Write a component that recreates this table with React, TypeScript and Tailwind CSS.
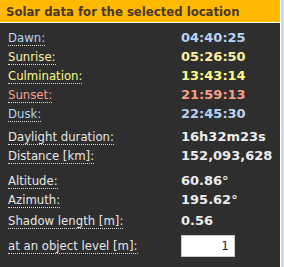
const rows = [
  { label: "Dawn:", value: "04:40:25", color: "text-[#b8d4f4]" },
  { label: "Sunrise:", value: "05:26:50", color: "text-[#fbf0a6]" },
  { label: "Culmination:", value: "13:43:14", color: "text-[#fcfc86]" },
  { label: "Sunset:", value: "21:59:13", color: "text-[#fb9f86]" },
  { label: "Dusk:", value: "22:45:30", color: "text-[#b8d4f4]" },
];

const Label = ({ text, color }: { text: string; color?: string }) => (
  <span className={`border-b border-dotted border-[#dcdcdc] text-[13px] leading-[14px] ${color ?? "text-[#e6e6e6]"}`}>
    {text}
  </span>
);

function Row({ label, value, color, className = "" }: { label: string; value: React.ReactNode; color?: string; className?: string }) {
  return (
    <div className={`flex h-[19px] items-center ${className}`}>
      <div className="w-[181px] pl-[8px]">
        <Label text={label} color={color} />
      </div>
      <div className={`font-[DejaVu_Sans] text-[13px] font-bold ${color ?? "text-[#ececec]"}`}>{value}</div>
    </div>
  );
}

export default function App() {
  return (
    <div className="flex h-[267px] w-[284px] bg-[#c9ddf3] font-['DejaVu_Sans_Condensed','DejaVu_Sans',sans-serif] text-[12px]">
      <div className="flex w-[281px] flex-col border-r border-white bg-[#2e2e2e]">
        <div className="h-[23px] border-b border-white bg-[#ffba00] pl-[6px] pt-[3px] text-[13px] font-bold leading-[17px] text-[#4a3826]">
          Solar data for the selected location
        </div>
        <div className="pt-[5px]">
          {rows.map((r) => (
            <Row key={r.label} {...r} />
          ))}
          <Row label="Daylight duration:" value="16h32m23s" className="mt-[4px]" />
          <Row label="Distance [km]:" value="152,093,628" />
          <Row label="Altitude:" value="60.86°" className="mt-[6px]" />
          <Row label="Azimuth:" value="195.62°" />
          <Row label="Shadow length [m]:" value="0.56" className="mt-[2px]" />
          <div className="mt-[4px] flex h-[24px] items-center">
            <div className="w-[181px] pl-[8px]">
              <Label text="at an object level [m]:" />
            </div>
            <input
              readOnly
              value="1"
              className="h-[22px] w-[54px] border border-[#c8c8c8] bg-white pr-[5px] text-right font-[DejaVu_Sans] text-[12px] text-[#1c1c44] outline-none"
            />
          </div>
        </div>
      </div>
    </div>
  );
}
